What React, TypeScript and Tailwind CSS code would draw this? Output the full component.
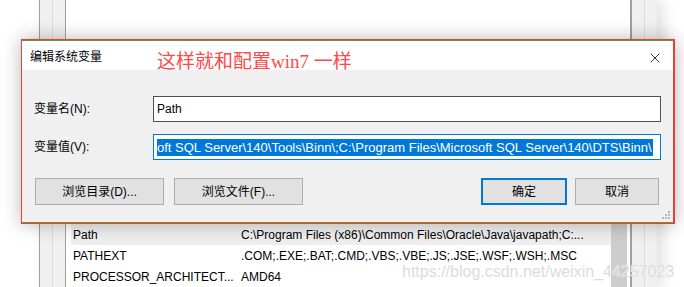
import { X } from 'lucide-react';

const ui = { fontFamily: '"Liberation Sans", "Noto Sans CJK SC", sans-serif' };

const rows = [
  { name: 'Path', value: 'C:\\Program Files (x86)\\Common Files\\Oracle\\Java\\javapath;C:...', selected: true },
  { name: 'PATHEXT', value: '.COM;.EXE;.BAT;.CMD;.VBS;.VBE;.JS;.JSE;.WSF;.WSH;.MSC', selected: false },
  { name: 'PROCESSOR_ARCHITECT...', value: 'AMD64', selected: false },
];

function Frame() {
  return (
    <div className="flex h-full">
      <div className="w-[13px] h-full border-l border-[#a0a0a0] bg-[#f0f0f0]" />
      <div className="w-[13px] h-full border-l border-[#dcdcdc] bg-[#f0f0f0]" />
    </div>
  );
}

function BackWindow() {
  return (
    <div className="ml-[39px] w-[618px] h-full flex shadow-[6px_0_14px_rgba(0,0,0,0.12)]">
      <Frame />
      <div className="flex-1 h-full border-l border-r border-[#a0a0a0] bg-white flex flex-col">
        <div className="h-[228px]" />
        <div className="flex pl-[5px] pr-[3px]">
          <div className="flex-1 flex flex-col">
            {rows.map((r) => (
              <div
                key={r.name}
                className={`h-[21px] flex items-center text-[12px] text-black ${r.selected ? 'bg-[#efefef]' : ''}`}
              >
                <span className="w-[170px] pl-[2px] whitespace-nowrap">{r.name}</span>
                <span className="whitespace-nowrap">{r.value}</span>
              </div>
            ))}
          </div>
          <div className="w-[16px] bg-[#cdcdcd]" />
        </div>
      </div>
      <Frame />
    </div>
  );
}

function Button({ label, primary }: { label: string; primary?: boolean }) {
  return (
    <div
      className={`h-[27px] flex items-center justify-center text-[12px] text-black bg-[#e1e1e1] ${
        primary ? 'border-2 border-[#0078d7]' : 'border border-[#adadad]'
      }`}
    >
      {label}
    </div>
  );
}

function Dialog() {
  return (
    <div className="absolute left-[21px] top-[39px] w-[654px] h-[185px] border-t border-b border-l border-r-2 border-[#f23b3b] shadow-[0_0_18px_rgba(0,0,0,0.28)]">
      <div className="h-full flex flex-col border-t border-b border-[#5c9a33]">
        <div className="h-[29px] bg-white flex items-start">
          <span className="pl-[8px] pt-[7px] text-[12px] text-black">编辑系统变量</span>
          <span
            className="ml-[55px] pt-[10px] text-[19px] leading-[22px] text-[#ff4848]"
            style={{ fontFamily: '"Liberation Serif", "Noto Sans CJK SC", serif' }}
          >
            这样就和配置win7 一样
          </span>
          <div className="ml-auto mr-[10px] mt-[9px]">
            <X size={16} strokeWidth={1.2} className="text-black" />
          </div>
        </div>
        <div className="relative flex-1 bg-[#f0f0f0] pt-[26px] pl-[12px] pr-[12px]">
          <div className="flex items-center">
            <span className="w-[119px] text-[12px] text-black">变量名(N):</span>
            <div className="flex-1 h-[26px] border border-[#505050] bg-white flex items-center pl-[3px] text-[12px] text-black">
              Path
            </div>
          </div>
          <div className="flex items-center mt-[12px]">
            <span className="w-[119px] text-[12px] text-black">变量值(V):</span>
            <div className="flex-1 h-[26px] border border-[#0078d7] bg-white flex items-center pl-[3px] overflow-hidden">
              <span className="bg-[#0078d7] text-white text-[13px] leading-[17px] whitespace-nowrap pr-[1px]">
                oft SQL Server\140\Tools\Binn\;C:\Program Files\Microsoft SQL Server\140\DTS\Binn\
              </span>
            </div>
          </div>
          <div className="flex mt-[18px] pl-[1px] pr-[2px]">
            <div className="w-[129px]">
              <Button label="浏览目录(D)..." />
            </div>
            <div className="w-[129px] ml-[10px]">
              <Button label="浏览文件(F)..." />
            </div>
            <div className="w-[86px] ml-auto">
              <Button label="确定" primary />
            </div>
            <div className="w-[84px] ml-[8px]">
              <Button label="取消" />
            </div>
          </div>
          <svg className="absolute right-[2px] bottom-[2px]" width="10" height="10" viewBox="0 0 10 10">
            <rect x="7" y="1" width="2" height="2" fill="#b8b8b8" />
            <rect x="4" y="4" width="2" height="2" fill="#b8b8b8" />
            <rect x="7" y="4" width="2" height="2" fill="#b8b8b8" />
            <rect x="1" y="7" width="2" height="2" fill="#b8b8b8" />
            <rect x="4" y="7" width="2" height="2" fill="#b8b8b8" />
            <rect x="7" y="7" width="2" height="2" fill="#b8b8b8" />
          </svg>
        </div>
      </div>
    </div>
  );
}

export default function App() {
  return (
    <div className="relative w-[684px] h-[287px] bg-white overflow-hidden" style={ui}>
      <BackWindow />
      <Dialog />
      <span
        className="absolute left-[402px] top-[260px] text-[16px] text-[#dcdcdc] whitespace-nowrap"
        style={{ textShadow: '0 0 1px #fff' }}
      >
        https://blog.csdn.net/weixin_44257023
      </span>
    </div>
  );
}
